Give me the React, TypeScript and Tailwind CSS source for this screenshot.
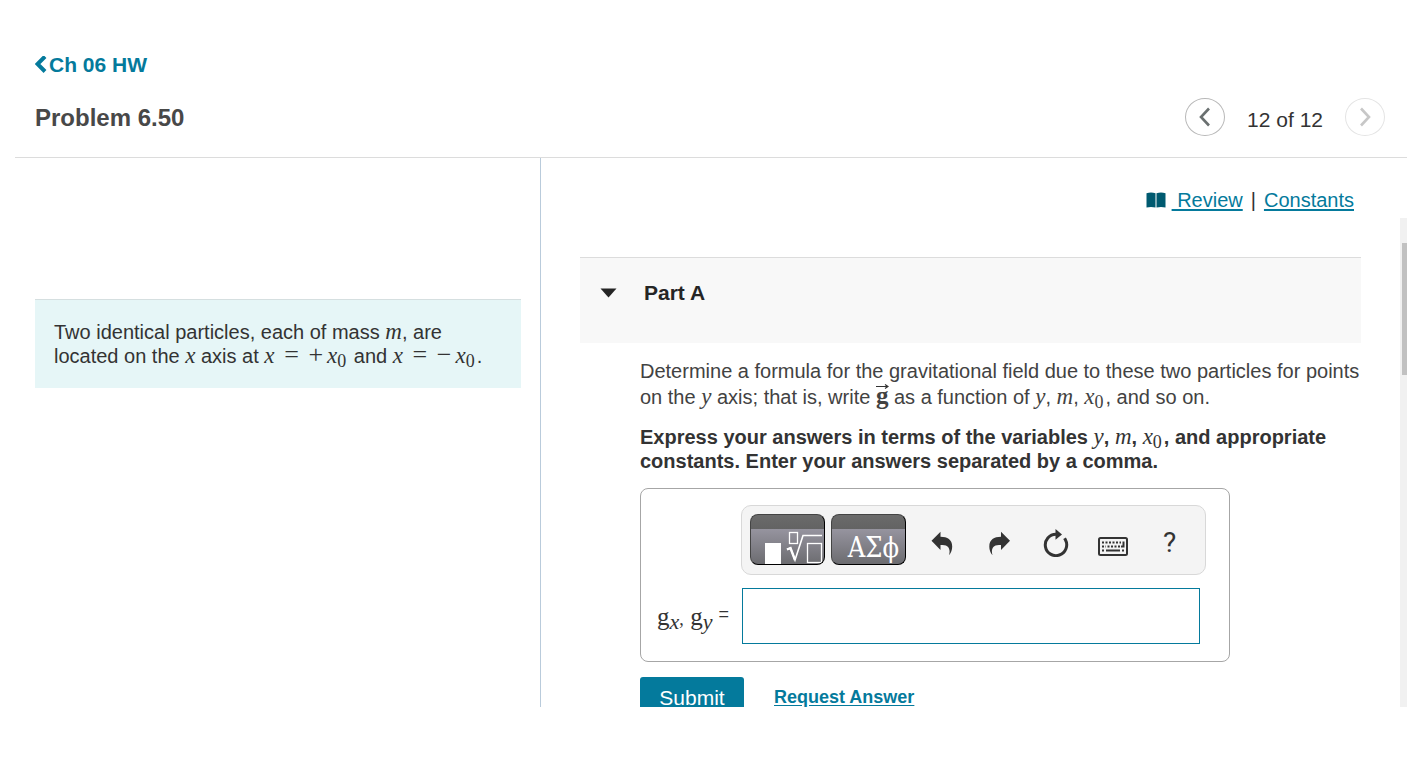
import type { ReactNode } from "react";

function Var({ children }: { children: ReactNode }) {
  return (
    <i className="font-['Liberation_Serif',serif] text-[23px] leading-[0] font-normal">{children}</i>
  );
}

function Op({ children }: { children: ReactNode }) {
  return (
    <span className="mr-1 ml-1 font-['Liberation_Serif',serif] text-[26px] leading-[0] font-normal">{children}</span>
  );
}

function Sign({ children }: { children: ReactNode }) {
  return (
    <span className="mr-1 font-['Liberation_Serif',serif] text-[26px] leading-[0] font-normal">{children}</span>
  );
}

function XZero() {
  return (
    <span className="mr-[2px] font-['Liberation_Serif',serif] font-normal">
      <Var>x</Var>
      <sub className="-bottom-1 text-[18px] leading-[0]">0</sub>
    </span>
  );
}

function VectorG() {
  return (
    <span className="relative font-['Liberation_Serif',serif] text-[25px] leading-[0] font-bold">
      g
      <svg className="absolute top-[2px] left-0 h-[5px] w-[13px]" viewBox="0 0 13 5" aria-hidden="true">
        <path d="M0 2.5h11M9 .5l3 2-3 2" fill="none" stroke="#333" strokeWidth="1.2" />
      </svg>
    </span>
  );
}

function UndoIcon() {
  return (
    <svg className="h-6 w-[22px]" viewBox="0 0 22 24" fill="#333" aria-hidden="true">
      <path d="M.5 9.7 9.5.8v5C16.500 5.800 21.200 8.800 21.200 15.500c0 3.500-1.300 6.500-3.200 8.800 1.200-4 1.200-10-6.500-10.200h-2v4.900Z" />
    </svg>
  );
}

function RedoIcon() {
  return (
    <svg className="h-6 w-[22px]" viewBox="-2 0 22 24" fill="#333" aria-hidden="true">
      <path d="M21.500 9.700 12.500.8v5C5.500 5.800.8 8.800.8 15.500c0 3.500 1.300 6.500 3.200 8.800-1.200-4-1.200-10 6.500-10.200h2v4.900Z" transform="translate(-1.500 0)" />
    </svg>
  );
}

function ReloadIcon() {
  return (
    <svg className="h-7 w-[26px]" viewBox="0 0 26 28" aria-hidden="true">
      <path d="M13 5.200a10.700 10.700 0 1 0 9.400 5.600l-.8-1.500" fill="none" stroke="#333" strokeWidth="3" />
      <path d="M12.500 0 19 5.600l-6.500 5.200Z" fill="#333" />
    </svg>
  );
}

function KeyboardIcon() {
  return (
    <svg className="mt-2 h-[19px] w-[30px]" viewBox="0 0 30 19" fill="none" stroke="#333" aria-hidden="true">
      <rect x="1" y="1" width="28" height="17" rx="1.500" strokeWidth="2" />
      <path d="M4 5.500h19M4 9.500h4m1.500 0H22" strokeWidth="2" strokeDasharray="2 1.500" />
      <path d="M4 13.500h2m2 0h14m2 0h2M23 9.500h2.500V4.500" strokeWidth="2" />
    </svg>
  );
}

function TemplateIcon() {
  return (
    <svg className="h-[49px] w-[73px]" viewBox="1 1 73 49" fill="none" stroke="#fff" aria-hidden="true">
      <path d="M15 29h16v21H15Z" fill="#fff" stroke="none" />
      <rect x="39.500" y="18.500" width="8" height="11" strokeWidth="1.300" />
      <path d="M37 35.500l3.500-1.500L45 46l8-24.500H72" strokeWidth="1.600" />
      <path d="M37 35.500l3.500-1.500L45 46" strokeWidth="2.400" />
      <rect x="57.500" y="29.500" width="14" height="19" strokeWidth="1.300" />
    </svg>
  );
}

const toolKey =
  "flex h-[51px] w-[75px] shrink-0 items-end justify-end overflow-hidden rounded-lg border border-[#444] border-r-black border-b-black bg-[linear-gradient(#6b6b6b_0,#636363_14px,#96949f_14px,#6c6c70_100%)]";
const toolIcon = "flex h-[51px] w-[57px] shrink-0 items-center justify-center pt-[6px]";
const link = "text-[#047a9c] underline underline-offset-2";

export default function App() {
  return (
    <div className="flex h-screen flex-col overflow-hidden bg-white pb-[59px] font-['Liberation_Sans',Arial,sans-serif] text-[20px] leading-6 text-[#333]">
      <header className="ml-[15px] shrink-0 border-b border-[#dcdcdc] pt-[53px] pr-[22px] pl-5">
        <a href="#assignment" className="flex w-fit items-center gap-[2px] text-[21px] font-bold text-[#047a9c]">
          <svg className="h-[18px] w-3" viewBox="0 0 12 18" aria-hidden="true">
            <path d="M10 .500 2.500 8l7.500 7.500" fill="none" stroke="#047a9c" strokeWidth="4" />
          </svg>
          Ch 06 HW
        </a>
        <div className="flex items-center justify-between pt-[21px] pb-[21px]">
          <h1 className="pt-[2px] text-[24px] font-bold text-[#484848]">Problem 6.50</h1>
          <nav className="flex items-center text-[21px] text-[#333]" aria-label="Problems">
            <button type="button" aria-label="Previous" className="flex h-[38px] w-10 items-center justify-center rounded-[50%] border border-[#b8b8b8]">
              <svg className="h-5 w-3" viewBox="0 0 12 20" aria-hidden="true">
                <path d="M10 1.500 2 10l8 8.500" fill="none" stroke="#6a7070" strokeWidth="2.600" />
              </svg>
            </button>
            <span className="px-[22px] pt-[5px]">12 of 12</span>
            <button type="button" disabled aria-label="Next" className="flex h-[38px] w-10 items-center justify-center rounded-[50%] border border-[#e4e4e4]">
              <svg className="h-5 w-3" viewBox="0 0 12 20" aria-hidden="true">
                <path d="M2 1.500l8 8.500-8 8.500" fill="none" stroke="#c7c7c7" strokeWidth="2.600" />
              </svg>
            </button>
          </nav>
        </div>
      </header>

      <div className="flex min-h-0 flex-1 overflow-hidden">
        <aside className="w-[541px] shrink-0 border-r border-[#b9cbdb] pt-[141px] pr-[19px] pl-[35px]">
          <p className="border-t border-[#d5dfe0] bg-[#e6f6f7] py-5 pr-6 pl-[19px]">
            Two identical particles, each of mass <Var>m</Var>, are located on the <Var>x</Var> axis at{" "}
            <span className="whitespace-nowrap">
              <Var>x</Var> <Op>=</Op> <Sign>+</Sign><XZero />
            </span>{" "}
            and{" "}
            <span className="whitespace-nowrap">
              <Var>x</Var> <Op>=</Op> <Sign>−</Sign><XZero />.
            </span>
          </p>
        </aside>

        <main className="min-w-0 flex-1 pr-[39px] pl-[39px]">
          <div className="flex items-center justify-end pt-[30px] pr-[7px]">
            <svg className="mr-[6px] h-4 w-5" viewBox="0 0 20 16" aria-hidden="true">
              <path d="M.5 1.200Q5-.3 9.500 1.200V15.500Q5 14.500.5 15.500ZM10.500 1.200q4.500-1.500 9 0v14.300q-4.500-1-9 0Z" fill="#005a70" />
            </svg>
            <a href="#review" className={link + " whitespace-pre"}> Review</a>
            <span className="px-2">|</span>
            <a href="#constants" className={link}>Constants</a>
          </div>

          <section>
            <h2 className="mt-[45px] border-t border-[#dcdcdc] bg-[#f8f8f8] pt-[23px] pb-[38px] text-[#252525]">
              <button type="button" className="flex items-center pl-5 text-[21px] font-bold">
                <svg className="mr-[27px] h-[10px] w-[17px]" viewBox="0 0 17 10" aria-hidden="true">
                  <path d="M.5.500h16L8.500 9.500Z" fill="#252525" />
                </svg>
                Part A
              </button>
            </h2>

            <div className="pl-[60px]">
              <p className="pt-[15px] leading-[26px] text-[#424242]">
                Determine a formula for the gravitational field due to these two particles for points on the{" "}
                <Var>y</Var> axis; that is, write <VectorG /> as a function of <Var>y</Var>, <Var>m</Var>, <XZero />, and so on.
              </p>
              <p className="pt-[15px] font-bold">
                Express your answers in terms of the variables <Var>y</Var>, <Var>m</Var>, <XZero />, and appropriate
                constants. Enter your answers separated by a comma.
              </p>

              <div className="mt-[15px] grid w-[590px] grid-cols-[100px_1fr] rounded-lg border border-[#a6a6a6] pt-4 pb-[17px]">
                <div className="col-start-2 mr-[23px] flex rounded-[10px] border border-[#d8d8d8] bg-[#f4f4f4] p-2 pr-0 pb-[9px]">
                  <button type="button" aria-label="Templates" className={toolKey + " mr-[6px]"}>
                    <TemplateIcon />
                  </button>
                  <button type="button" aria-label="Symbols" className={toolKey + " mr-[7px] pr-[6px] font-['DejaVu_Serif_Condensed','DejaVu_Serif',serif] text-[27px] leading-8 text-white"}>
                    ΑΣϕ
                  </button>
                  <button type="button" aria-label="Undo" className={toolIcon}><UndoIcon /></button>
                  <button type="button" aria-label="Redo" className={toolIcon}><RedoIcon /></button>
                  <button type="button" aria-label="Reset" className={toolIcon}><ReloadIcon /></button>
                  <button type="button" aria-label="Keyboard shortcuts" className={toolIcon}><KeyboardIcon /></button>
                  <button type="button" aria-label="Help" className={toolIcon + " font-['Roboto',sans-serif] text-[28px]"}>?</button>
                </div>
                <label htmlFor="answer" className="mt-[13px] flex items-center justify-between pr-3 pl-4 font-['Liberation_Serif',serif] text-[25px]">
                  <span className="pt-1">
                    g<sub className="-bottom-1 text-[22px] italic">x</sub>
                    <span className="mr-[2px] text-[18px]">, </span>g<sub className="-bottom-1 text-[22px] italic">y</sub>
                  </span>
                  <span className="pb-1 font-['Liberation_Sans',sans-serif] text-[18px]">=</span>
                </label>
                <input id="answer" type="text" className="mt-[13px] mr-[29px] ml-px h-14 border border-[#047a9c] px-3 outline-none" />
              </div>

              <div className="mt-[15px] flex items-start">
                <button type="button" className="h-[42px] w-[104px] rounded-[3px] bg-[#047a9c] text-[21px] text-white">Submit</button>
                <a href="#request" className={link + " ml-[30px] pt-2 text-[18px] font-bold"}>Request Answer</a>
              </div>
            </div>
          </section>
        </main>

        <div className="mt-[60px] w-[7px] shrink-0 bg-[#f1f1f1] pt-[25px] pl-[2px]" aria-hidden="true">
          <div className="h-[132px] bg-[#c1c1c1]" />
        </div>
      </div>
    </div>
  );
}
